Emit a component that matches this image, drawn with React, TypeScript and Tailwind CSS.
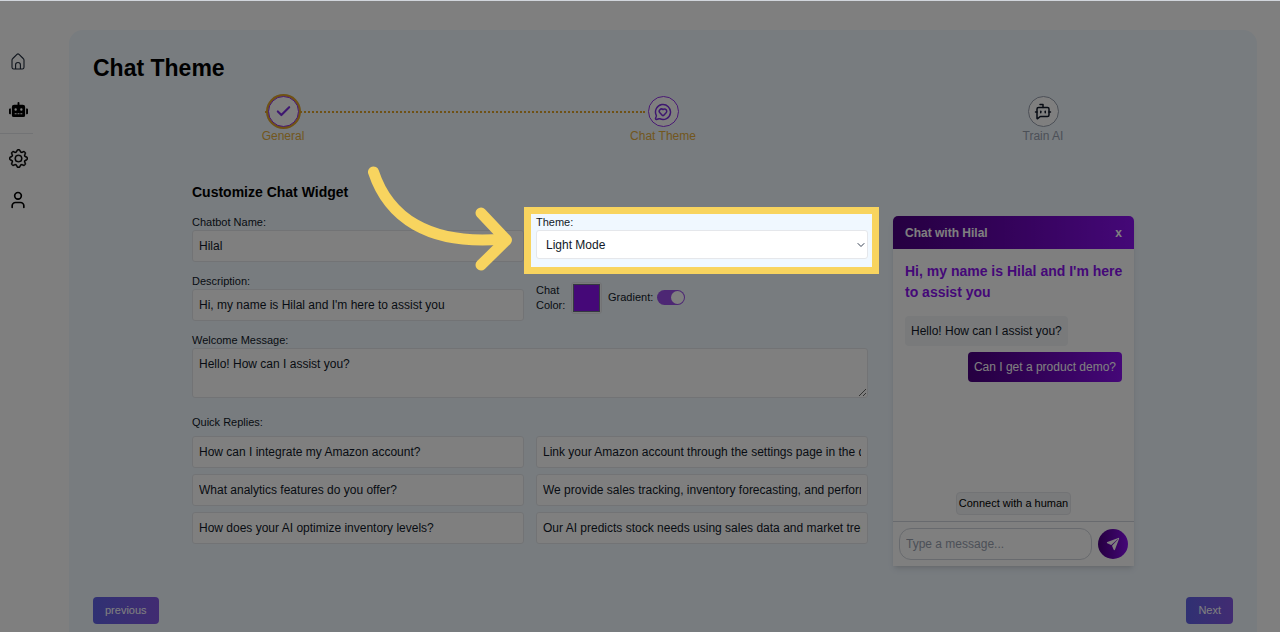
import React, { useState } from 'react';
import { BotMessageSquare, Check, ChevronDown, MessageCircleHeart, User } from 'lucide-react';
import { BsGear } from 'react-icons/bs';
import { FaRobot } from 'react-icons/fa';
import { IoPaperPlane } from 'react-icons/io5';

type StepState = 'done' | 'current' | 'todo';

interface StepProps {
  label: string;
  state: StepState;
  icon: React.ReactNode;
}

const circleStyles: Record<StepState, string> = {
  done: 'border-[#9333ea] text-[#7c2fe0] ring-2 ring-[#dfa32a]',
  current: 'border-[#9333ea] text-[#7c2fe0]',
  todo: 'border-gray-400 text-gray-900',
};

const quickReplies = [
  {
    question: 'How can I integrate my Amazon account?',
    answer: 'Link your Amazon account through the settings page in the dashboard.',
  },
  {
    question: 'What analytics features do you offer?',
    answer: 'We provide sales tracking, inventory forecasting, and performance reports.',
  },
  {
    question: 'How does your AI optimize inventory levels?',
    answer: 'Our AI predicts stock needs using sales data and market trends.',
  },
];

const inputClass =
  'block h-8 w-full min-w-0 rounded-[3px] border border-gray-200 bg-white px-1.5 text-xs text-gray-900';
const labelClass = 'block text-[11px] leading-[15px] text-gray-900';

const HomeIcon = () => (
  <svg width="14" height="17" viewBox="0 0 14 17" fill="none" stroke="currentColor" strokeWidth="1.1">
    <path d="M1 7.2c0-.7.3-1.300.8-1.700L6.200 1.200c.5-.4 1.100-.4 1.600 0l4.400 4.300c.5.400.8 1 .8 1.700v7c0 1-.7 1.800-1.700 1.800H2.700C1.700 16 1 15.200 1 14.200z" />
    <path d="M4.600 16v-4.200c0-1.300 1-2.300 2.400-2.300s2.400 1 2.400 2.300V16" />
  </svg>
);

const Sidebar = () => (
  <nav className="flex w-[69px] shrink-0 flex-col text-black">
    <a href="#home" aria-label="Home" className="mt-[51px] flex h-[18px] w-9 items-center justify-center text-gray-800">
      <HomeIcon />
    </a>
    <a href="#chatbots" aria-label="Chatbots" className="mt-[29px] flex h-5 w-9 items-center justify-center">
      <FaRobot size={19} />
    </a>
    <hr className="mt-[14px] w-[33px] border-gray-200" />
    <a href="#settings" aria-label="Settings" className="mt-[14px] flex h-5 w-9 items-center justify-center">
      <BsGear size={19} strokeWidth={0.3} />
    </a>
    <a href="#profile" aria-label="Profile" className="mt-[22px] flex h-5 w-9 items-center justify-center">
      <User size={20} strokeWidth={2} />
    </a>
  </nav>
);

const Step = ({ label, state, icon }: StepProps) => (
  <li className="relative flex flex-col items-center">
    {state === 'done' && (
      <span className="absolute top-[15px] left-1/2 -ml-[18px] w-full border-t-2 border-dotted border-[#dfa32a]" />
    )}
    <span
      className={`relative flex h-[31px] w-[31px] items-center justify-center rounded-full border bg-white ${circleStyles[state]}`}
    >
      {icon}
    </span>
    <span className={`mt-px text-xs leading-4 ${state === 'todo' ? 'text-gray-400' : 'text-[#e5ae3c]'}`}>
      {label}
    </span>
  </li>
);

// Dims everything around the field and points an arrow at it
const Spotlight = () => (
  <>
    <div className="pointer-events-none absolute -top-2 -right-[11px] -left-3 z-20 h-[67px] border-[7px] border-[#f8d45f] shadow-[0_0_0_9999px_rgba(0,0,0,0.5)]" />
    <svg
      className="pointer-events-none absolute -top-[49px] right-full z-30 mr-[23px]"
      width="145"
      height="110"
      viewBox="0 0 145 110"
      fill="none"
      stroke="#f8d45f"
      strokeWidth="11"
      strokeLinecap="round"
      strokeLinejoin="round"
    >
      <path d="M5.500 6C20 50 59 80 136 73" />
      <path d="M113 47L138.500 74L113 99" />
    </svg>
  </>
);

const WidgetForm = () => {
  const [gradient, setGradient] = useState(true);

  return (
    <form className="min-w-0 flex-1">
      <h2 className="text-sm leading-5 font-bold text-black">Customize Chat Widget</h2>
      <div className="mt-[13px] grid grid-cols-2 gap-3">
        <div>
          <label htmlFor="name" className={labelClass}>Chatbot Name:</label>
          <input id="name" className={inputClass} defaultValue="Hilal" />
        </div>
        <div className="relative">
          <label htmlFor="theme" className={labelClass}>Theme:</label>
          <div className="relative">
            <select
              id="theme"
              className="block h-[29px] w-full appearance-none rounded-[3px] border border-gray-200 bg-white pl-[9px] text-xs text-gray-900"
            >
              <option>Light Mode</option>
              <option>Dark Mode</option>
            </select>
            <ChevronDown size={12} strokeWidth={2} className="pointer-events-none absolute top-[9px] right-px text-gray-700" />
          </div>
          <Spotlight />
        </div>

        <div>
          <label htmlFor="description" className={labelClass}>Description:</label>
          <input id="description" className={inputClass} defaultValue="Hi, my name is Hilal and I'm here to assist you" />
        </div>
        <div className="flex items-center">
          <label htmlFor="color" className="w-[35px] text-[11px] leading-[15px] text-gray-900">Chat Color:</label>
          <input
            id="color"
            type="color"
            defaultValue="#8a10f0"
            className="h-8 w-[31px] rounded-[3px] border border-gray-200 bg-gray-100 p-px [&::-webkit-color-swatch]:border-gray-500 [&::-webkit-color-swatch-wrapper]:p-0"
          />
          <label htmlFor="gradient" className="ml-1.5 text-[11px] leading-[15px] text-gray-900">Gradient:</label>
          <input
            id="gradient"
            type="checkbox"
            role="switch"
            checked={gradient}
            onChange={(e) => setGradient(e.target.checked)}
            className="ml-1 flex h-[15px] w-7 appearance-none items-center rounded-full bg-gray-300 px-px before:h-[13px] before:w-[13px] before:rounded-full before:bg-white checked:justify-end checked:bg-[#9a4fe8]"
          />
        </div>

        <div className="col-span-2">
          <label htmlFor="welcome" className={labelClass}>Welcome Message:</label>
          <textarea
            id="welcome"
            className="block h-[50px] w-full rounded-[3px] border border-gray-200 bg-white px-1.5 py-[5px] text-xs leading-5 text-gray-900"
            defaultValue="Hello! How can I assist you?"
          />
        </div>
      </div>

      <fieldset className="mt-[17px]">
        <legend className={labelClass}>Quick Replies:</legend>
        <div className="mt-1.5 grid grid-cols-2 gap-x-3 gap-y-1.5">
          {quickReplies.map((reply, i) => (
            <React.Fragment key={reply.question}>
              <input aria-label={`Question ${i + 1}`} className={inputClass} defaultValue={reply.question} />
              <input aria-label={`Answer ${i + 1}`} className={inputClass} defaultValue={reply.answer} />
            </React.Fragment>
          ))}
        </div>
      </fieldset>
    </form>
  );
};

const ChatPreview = () => (
  <section className="mt-[34px] flex h-[350px] w-[241px] shrink-0 flex-col overflow-hidden rounded-t-[5px] bg-white shadow-md">
    <header className="flex h-[33px] items-center justify-between bg-linear-to-r from-[#4b0082] to-[#8a10f0] px-3 text-white">
      <h3 className="text-xs font-bold">Chat with Hilal</h3>
      <button type="button" aria-label="Close chat" className="text-xs font-bold">x</button>
    </header>
    <div className="flex flex-1 flex-col px-3 pt-3 pb-1.5">
      <p className="-mr-2 text-sm leading-[21px] font-bold text-[#8a10f0]">Hi, my name is Hilal and I'm here to assist you</p>
      <p className="mt-[13px] self-start rounded bg-gray-100 px-1.5 py-[5px] text-xs leading-5 text-gray-900">
        Hello! How can I assist you?
      </p>
      <p className="mt-1.5 self-end rounded bg-linear-to-r from-[#4b0082] to-[#8a10f0] px-1.5 py-[5px] text-xs leading-5 text-white">
        Can I get a product demo?
      </p>
      <button
        type="button"
        className="mt-auto h-[23px] self-center rounded border border-gray-200 bg-gray-100 px-0.5 text-[11px] text-black"
      >
        Connect with a human
      </button>
    </div>
    <div className="flex items-center gap-1.5 border-t border-gray-300 p-1.5">
      <input
        aria-label="Message"
        placeholder="Type a message..."
        className="h-8 min-w-0 flex-1 rounded-xl border border-gray-300 bg-white px-1.5 text-xs placeholder:text-gray-400"
      />
      <button
        type="button"
        aria-label="Send"
        className="flex h-[30px] w-[30px] items-center justify-center rounded-full bg-linear-to-r from-[#4b0082] to-[#8a10f0] text-white"
      >
        <IoPaperPlane size={14} />
      </button>
    </div>
  </section>
);

const navButtonClass =
  'h-[27px] rounded bg-linear-to-r from-[#5f62e6] to-[#8357e4] px-3 text-[11px] text-white';

export default function App() {
  return (
    <div className="flex h-screen overflow-hidden border-t border-gray-300 bg-white font-['Liberation_Sans',Arial,sans-serif]">
      <Sidebar />
      <main className="mt-[29px] mr-[23px] min-w-0 flex-1 rounded-t-[14px] bg-[#f0f8ff] p-6">
        <h1 className="text-[23px] leading-7 font-bold text-black">Chat Theme</h1>
        <ol className="mt-[14px] grid grid-cols-3">
          <Step label="General" state="done" icon={<Check size={17} strokeWidth={3} />} />
          <Step label="Chat Theme" state="current" icon={<MessageCircleHeart size={18} />} />
          <Step label="Train AI" state="todo" icon={<BotMessageSquare size={18} />} />
        </ol>
        <div className="mx-auto mt-[38px] flex w-full max-w-[942px] items-start gap-[25px]">
          <WidgetForm />
          <ChatPreview />
        </div>
        <div className="mt-[31px] flex justify-between">
          <button type="button" className={navButtonClass}>previous</button>
          <button type="button" className={navButtonClass}>Next</button>
        </div>
      </main>
    </div>
  );
}
